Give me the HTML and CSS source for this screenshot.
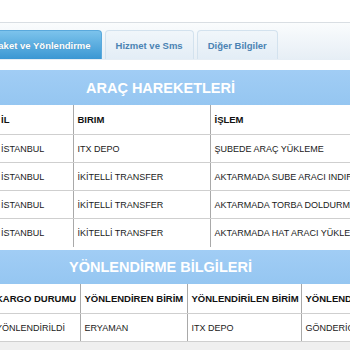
FILE: index.html
```html
<!DOCTYPE html>
<html>
<head>
<meta charset="utf-8">
<link rel="stylesheet" href="styles.css">
</head>
<body>
<div class="page">
  <div class="tabbar">
    <div class="tab active">Paket ve Yönlendirme</div>
    <div class="tab">Hizmet ve Sms</div>
    <div class="tab">Diğer Bilgiler</div>
  </div>
  <div class="band">ARAÇ HAREKETLERİ</div>
  <table class="grid grid1">
    <colgroup><col class="c1"><col class="c2"><col class="c3"></colgroup>
    <tr class="head"><th>İL</th><th>BIRIM</th><th>İŞLEM</th></tr>
    <tr><td>İSTANBUL</td><td>ITX DEPO</td><td>ŞUBEDE ARAÇ YÜKLEME</td></tr>
    <tr><td>İSTANBUL</td><td>İKİTELLİ TRANSFER</td><td>AKTARMADA SUBE ARACI INDIRME</td></tr>
    <tr><td>İSTANBUL</td><td>İKİTELLİ TRANSFER</td><td>AKTARMADA TORBA DOLDURMA</td></tr>
    <tr><td>İSTANBUL</td><td>İKİTELLİ TRANSFER</td><td>AKTARMADA HAT ARACI YÜKLEME</td></tr>
  </table>
  <div class="band band2">YÖNLENDİRME BİLGİLERİ</div>
  <table class="grid grid2">
    <colgroup><col class="d1"><col class="d2"><col class="d3"><col class="d4"></colgroup>
    <tr class="head"><th>KARGO DURUMU</th><th>YÖNLENDİREN BİRİM</th><th>YÖNLENDİRİLEN BİRİM</th><th>YÖNLENDİRME NEDENİ</th></tr>
    <tr><td>YÖNLENDİRİLDİ</td><td>ERYAMAN</td><td>ITX DEPO</td><td>GÖNDERİCİ TALEBİ</td></tr>
  </table>
  <div class="foot"></div>
</div>
</body>
</html>
```
FILE: styles.css
```css
html, body {
  margin: 0;
  padding: 0;
  background: #ffffff;
  overflow: hidden;
}
.page {
  width: 350px;
  height: 350px;
  overflow: hidden;
  padding-top: 22px;
  box-sizing: border-box;
  font-family: "Liberation Sans", Arial, sans-serif;
}
.tabbar {
  height: 38px;
  box-sizing: border-box;
  border-top: 1px solid #d9dee3;
  background: linear-gradient(#fafcfd, #e6eef5);
  display: flex;
  align-items: flex-end;
  gap: 3px;
  margin-left: -19px;
  padding-bottom: 1px;
  width: 369px;
}
.tab {
  height: 29px;
  box-sizing: border-box;
  padding: 0 10px;
  display: flex;
  align-items: center;
  font-size: 9.5px;
  font-weight: bold;
  color: #4b83b3;
  white-space: nowrap;
  border: 1px solid #d3e2ee;
  border-bottom: none;
  border-radius: 4px 4px 0 0;
  background: linear-gradient(#f1f6fa, #e3edf6);
}
.tab.active {
  color: #ffffff;
  border-color: #5aa9dc;
  background: linear-gradient(#7cc3ec, #3a97d3);
  text-shadow: 0 0 1px rgba(0,0,0,0.2);
}
.band {
  margin-top: 10px;
  height: 35px;
  display: flex;
  align-items: center;
  justify-content: center;
  padding-right: 29px;
  background: linear-gradient(#a1cdf5, #95c6f1);
  color: #ffffff;
  font-size: 14.5px;
  font-weight: bold;
  letter-spacing: 0;
  white-space: nowrap;
}
.band2 {
  margin-top: 3px;
  height: 34px;
}
.grid {
  border-collapse: collapse;
  table-layout: fixed;
  font-size: 9px;
  color: #1a1a1a;
}
.grid th, .grid td {
  padding: 0 4px;
  text-align: left;
  white-space: nowrap;
  overflow: hidden;
  border-bottom: 1px solid #cfcfcf;
  border-left: 1px solid #a9a9a9;
}
.grid th:first-child, .grid td:first-child {
  border-left: none;
}
.grid th {
  font-weight: bold;
  font-size: 9.5px;
  color: #111;
}
.grid1 {
  margin-left: -3px;
  width: 413px;
}
.grid1 .head th { height: 29px; }
.grid1 td { height: 27px; }
.grid1 tr:last-child td { border-bottom: none; height: 28px; }
.c1 { width: 76px; }
.c2 { width: 137px; }
.c3 { width: 200px; }
.grid2 {
  margin-left: -8px;
  width: 429px;
}
.grid2 .head th { height: 29px; }
.grid2 td { height: 27px; }
.d1 { width: 88px; }
.d2 { width: 107px; }
.d3 { width: 114px; }
.d4 { width: 120px; }
.foot {
  height: 20px;
  background: #efefef;
}
```
